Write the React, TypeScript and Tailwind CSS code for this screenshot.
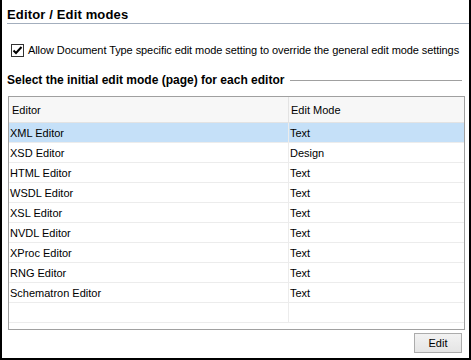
import React from "react";

const rows: [string, string][] = [
  ["XML Editor", "Text"],
  ["XSD Editor", "Design"],
  ["HTML Editor", "Text"],
  ["WSDL Editor", "Text"],
  ["XSL Editor", "Text"],
  ["NVDL Editor", "Text"],
  ["XProc Editor", "Text"],
  ["RNG Editor", "Text"],
  ["Schematron Editor", "Text"],
  ["", ""],
];

export default function App() {
  return (
    <div className="w-[471px] h-[360px] bg-white border-l-2 border-r-2 border-b-2 border-black flex flex-col text-[11px] leading-[13px] text-black font-['Liberation_Sans',sans-serif]">
      <div className="mt-[7px] ml-[5px] h-[17px] border-b border-[#a3aebd] font-bold text-[13px] leading-[16px] tracking-[0.15px]">
        Editor / Edit modes
      </div>
      <div className="mt-[20px] ml-[9px] flex items-center h-[13px]">
        <div className="w-[13px] h-[13px] border border-[#333] bg-white flex items-center justify-center">
          <svg width="11" height="11" viewBox="0 0 11 11">
            <path d="M1.5 5.5 L4 8 L9.5 2" stroke="#000" strokeWidth="2" fill="none" />
          </svg>
        </div>
        <span className="ml-[4px] tracking-[-0.08px] whitespace-nowrap">
          Allow Document Type specific edit mode setting to override the general edit mode settings
        </span>
      </div>
      <div className="mt-[17px] ml-[5px] mr-[7px] flex items-center h-[13px]">
        <span className="font-bold text-[12px] whitespace-nowrap">Select the initial edit mode (page) for each editor</span>
        <div className="flex-1 h-px bg-[#a0a0a0] ml-[6px]" />
      </div>
      <div className="mt-[9px] ml-[6px] mr-[4px] h-[234px] border border-[#a0a0a0] flex flex-col">
        <div className="flex h-[26px] bg-[#f7f7f7] border-b border-[#e3e3e3]">
          <div className="w-[280px] border-r border-[#e3e3e3] pl-[3px] pt-[2px] flex items-center">Editor</div>
          <div className="flex-1 pl-[2px] pt-[2px] flex items-center">Edit Mode</div>
        </div>
        {rows.map(([e, m], i) => (
          <div
            key={i}
            className={
              "flex h-[20px] border-b border-[#ececec] " + (i === 0 ? "bg-[#c5e0f8]" : "bg-white")
            }
          >
            <div className="w-[280px] border-r border-[#ececec] pl-[1px] pt-[1px] flex items-center">{e}</div>
            <div className="flex-1 pl-[1px] pt-[1px] flex items-center">{m}</div>
          </div>
        ))}
      </div>
      <div className="mt-[3px] mr-[7px] flex justify-end">
        <button className="w-[48px] h-[20px] border border-[#acacac] bg-gradient-to-b from-[#f2f2f2] to-[#e5e5e5] flex items-center justify-center text-[11px]">
          Edit
        </button>
      </div>
    </div>
  );
}
